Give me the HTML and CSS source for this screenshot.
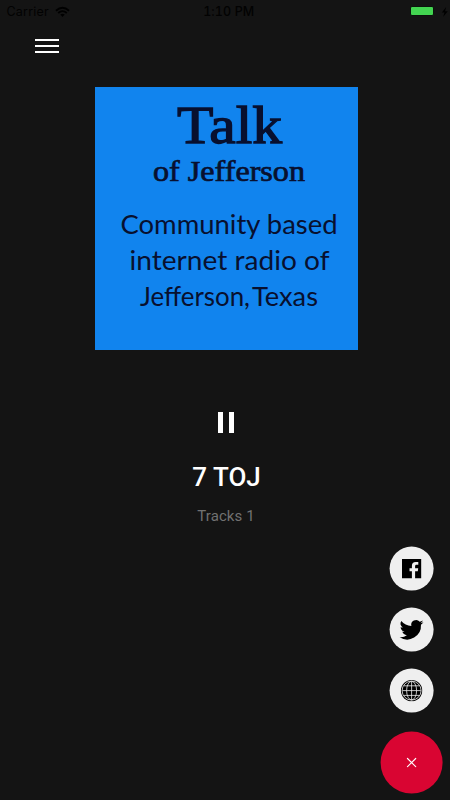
FILE: index.html
```html
<!DOCTYPE html>
<html lang="en">
<head>
<meta charset="utf-8">
<title>Talk of Jefferson</title>
<link rel="stylesheet" href="styles.css">
</head>
<body>
<div class="app">
  <header class="status">
    <div class="carrier"><span>Carrier</span>
      <svg width="15" height="12" viewBox="0 0 16 12"><path d="M1 4.600Q8-1.500 15 4.600M3.400 7Q8 3.100 12.600 7" fill="none" stroke="#000" stroke-width="2"/><path d="M5.600 8.700Q8 6.800 10.400 8.700L8 11.200z"/></svg>
    </div>
    <div class="time">1:10 PM</div>
    <div class="power"><span class="battery"></span>
      <svg width="8" height="12" viewBox="0 0 8 12"><path d="M5.200 1 .8 6.600h2.700L2.100 11l4.700-5.800H4.100z"/></svg>
    </div>
  </header>
  <button class="menu" aria-label="Menu"><span></span><span></span><span></span></button>
  <main class="player">
    <svg class="cover" viewBox="0 0 263 263">
      <text class="serif large" x="82" y="55.500" font-size="53" textLength="105" lengthAdjust="spacingAndGlyphs">Talk</text>
      <text class="serif" x="58" y="93.500" font-size="29" textLength="152" lengthAdjust="spacingAndGlyphs">of Jefferson</text>
      <text class="sans" x="25.500" y="147" font-size="27.500" textLength="217" lengthAdjust="spacingAndGlyphs">Community based</text>
      <text class="sans" x="34.500" y="182.500" font-size="27.500" textLength="200" lengthAdjust="spacingAndGlyphs">internet radio of</text>
      <text class="sans" x="45" y="219" font-size="27.500" textLength="110" lengthAdjust="spacingAndGlyphs">Jefferson,</text>
      <text class="sans" x="157" y="219" font-size="27.500" textLength="66" lengthAdjust="spacingAndGlyphs">Texas</text>
    </svg>
    <button class="pause" aria-label="Pause"><span></span><span></span></button>
    <h1 class="title">7 TOJ</h1>
    <p class="subtitle">Tracks 1</p>
  </main>
  <nav class="actions">
    <button class="action" aria-label="Facebook">
      <svg width="20" height="20" viewBox="0 0 20 20"><path fill-rule="evenodd" d="M.4.4h19.300v19.400H.4zM10.300 19.800h3.200v-7.200h2.700l.4-3h-3.100V7.700c0-1 .4-1.500 1.500-1.500h1.700V3.400h-2.500c-2.700 0-3.900 1.500-3.900 3.900v2.300H7.900v3h2.400z"/></svg>
    </button>
    <button class="action" aria-label="Twitter">
      <svg width="26" height="26" viewBox="0.500 0.600 23 23"><path d="M22.500 5.700c-.8.4-1.600.6-2.500.7.900-.5 1.600-1.400 1.900-2.300-.8.500-1.800.8-2.700 1a4.300 4.300 0 0 0-7.400 3.900C8.200 8.800 5 7.100 2.900 4.500a4.300 4.300 0 0 0 1.300 5.700c-.7 0-1.400-.2-1.900-.5 0 2.100 1.400 3.800 3.400 4.300-.6.200-1.300.2-1.900.1.500 1.700 2.100 2.900 4 3A8.600 8.600 0 0 1 1.400 18.800a12.200 12.200 0 0 0 18.900-10.900c.9-.6 1.600-1.300 2.200-2.200z"/></svg>
    </button>
    <button class="action" aria-label="Website">
      <svg width="22" height="22" viewBox="0 0 22 22"><circle cx="11" cy="11" r="10.700"/><g fill="none" stroke="#efefef" stroke-width=".8"><circle cx="11" cy="11" r="9.500"/><path d="M11 1.700v18.600M1.700 11h18.600M3.100 6.200h15.800M3.100 15.800h15.800"/><ellipse cx="11" cy="11" rx="5" ry="9.300"/></g></svg>
    </button>
    <button class="close" aria-label="Close">
      <svg width="10" height="10" viewBox="0 0 10 10"><path d="M.4.4l9.200 9.200M9.600.4L.4 9.600" stroke="#fff" stroke-width="1.100"/></svg>
    </button>
  </nav>
</div>
</body>
</html>
```
FILE: styles.css
```css
* {
  box-sizing: border-box;
}

body {
  margin: 0;
  background: #141414;
}

button {
  display: flex;
  padding: 0;
  border: 0;
  background: none;
}

svg {
  display: block;
}

.app {
  position: relative;
  width: 450px;
  height: 800px;
  overflow: hidden;
  background: #141414;
  font-family: Roboto, sans-serif;
}

.status {
  display: grid;
  grid-template-columns: 1fr auto 1fr;
  align-items: center;
  height: 23px;
  padding: 0 1px 0 6.5px;
  color: #020202;
  font: 12.5px/23px Inter, sans-serif;
}

.carrier,
.power {
  display: flex;
  align-items: center;
  gap: 6px;
}

.carrier span {
  letter-spacing: 0.2px;
}

.time {
  margin-left: 2px;
  font-weight: 500;
  font-feature-settings: "tnum";
  letter-spacing: 0.1px;
}

.power {
  justify-content: flex-end;
  gap: 7px;
}

.battery {
  width: 24px;
  height: 10px;
  margin-bottom: 1px;
  border: 1px solid #0b130c;
  border-radius: 2px;
  background: #43d551;
}

.menu {
  flex-direction: column;
  gap: 4px;
  width: 24px;
  margin: 16px 0 0 35px;
}

.menu span {
  width: 24px;
  height: 2px;
  background: #fff;
}

.player {
  display: flex;
  flex-direction: column;
  align-items: center;
  margin-top: 34px;
  padding-left: 3px;
}

.cover {
  width: 263px;
  height: 263px;
  background: #1184ee;
  fill: #08102f;
}

.serif {
  font-family: "Liberation Serif", serif;
  stroke: #08102f;
  stroke-width: 0.7px;
}

.large {
  stroke-width: 1.3px;
}

.sans {
  font-family: Lato, sans-serif;
}

.pause {
  gap: 6px;
  margin: 62px 1px 0 0;
}

.pause span {
  width: 5px;
  height: 21px;
  background: #fff;
}

.title {
  margin: 28px 0 0;
  color: #fff;
  font-size: 26px;
  font-weight: 500;
  line-height: 32px;
}

.subtitle {
  margin: 13px 1px 0 0;
  color: #717171;
  font-size: 15px;
  line-height: 20px;
  letter-spacing: 0.1px;
}

.actions {
  position: absolute;
  right: 7px;
  bottom: 6px;
  display: flex;
  flex-direction: column;
  align-items: center;
  gap: 17px;
  transform: translate(-0.4px, -0.4px);
}

.action,
.close {
  align-items: center;
  justify-content: center;
  border-radius: 50%;
}

.action {
  width: 44px;
  height: 44px;
  background: #efefef;
}

.close {
  width: 62px;
  height: 62px;
  margin-top: 2px;
  background: #d90532;
}
```
